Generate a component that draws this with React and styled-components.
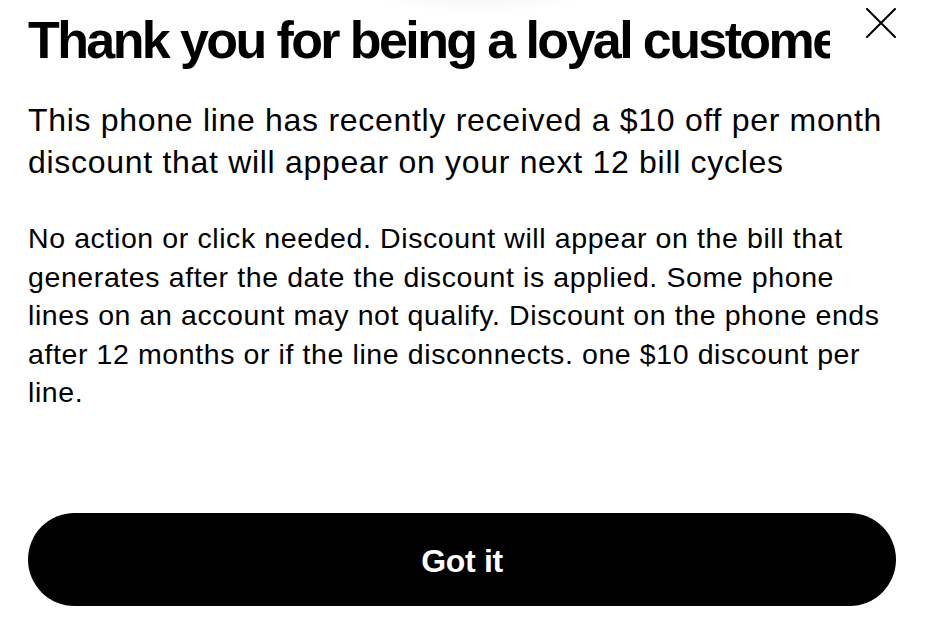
import React from "react";
import styled, { createGlobalStyle } from "styled-components";

const GlobalStyle = createGlobalStyle`
  html, body {
    margin: 0;
    padding: 0;
    background: #ffffff;
  }
  body {
    font-family: "Liberation Sans", Arial, Helvetica, sans-serif;
    color: #000000;
    -webkit-font-smoothing: antialiased;
  }
`;

const Sheet = styled.div`
  width: 927px;
  height: 632px;
  box-sizing: border-box;
  padding: 0 31px 0 28px;
  display: flex;
  flex-direction: column;
  overflow: hidden;
  background:
    radial-gradient(ellipse 100px 12px at 480px 0px, #f7f7f7 0%, rgba(248,248,248,0.5) 60%, rgba(255,255,255,0) 100%),
    #ffffff;
`;

const Header = styled.div`
  display: flex;
  align-items: flex-start;
  gap: 36px;
`;

const Title = styled.h1`
  flex: 1;
  min-width: 0;
  margin: 8px 0 0 0;
  font-family: "Liberation Sans", Arial, Helvetica, sans-serif;
  font-weight: 700;
  font-size: 52px;
  line-height: 64px;
  letter-spacing: -2.6px;
  white-space: nowrap;
  overflow: hidden;
  color: #000;
`;

const CloseButton = styled.button`
  flex: none;
  width: 30px;
  height: 30px;
  margin-top: 8px;
  padding: 0;
  border: none;
  background: transparent;
  cursor: pointer;
  display: flex;
  align-items: center;
  justify-content: center;
`;

const Lead = styled.p`
  margin: 27px 0 0 0;
  font-size: 32px;
  line-height: 42px;
  letter-spacing: 0.7px;
  font-weight: 400;
  color: #000;
`;

const Fine = styled.p`
  margin: 36px 0 0 0;
  font-size: 28.5px;
  line-height: 38.5px;
  letter-spacing: 0.6px;
  font-weight: 400;
  color: #000;
`;

const Spacer = styled.div`
  flex: 1;
`;

const PrimaryButton = styled.button`
  display: flex;
  align-items: center;
  justify-content: center;
  width: 100%;
  height: 93px;
  margin-bottom: 26px;
  padding: 4px 0 0 0;
  box-sizing: border-box;
  border: none;
  border-radius: 47px;
  background: #000;
  color: #fff;
  font-family: "Liberation Sans", Arial, Helvetica, sans-serif;
  font-weight: 700;
  font-size: 32px;
  letter-spacing: -0.3px;
  cursor: pointer;
`;

function CloseIcon() {
  return (
    <svg width="30" height="30" viewBox="0 0 30 30" fill="none">
      <path d="M1 1 L29 29 M29 1 L1 29" stroke="#000" strokeWidth="2" strokeLinecap="round" />
    </svg>
  );
}

export default function App() {
  return (
    <>
      <GlobalStyle />
      <Sheet>
        <Header>
          <Title>Thank you for being a loyal customer</Title>
          <CloseButton aria-label="Close">
            <CloseIcon />
          </CloseButton>
        </Header>
        <Lead>
          This phone line has recently received a $10 off per month discount that will appear on your next 12 bill cycles
        </Lead>
        <Fine>
          No action or click needed. Discount will appear on the bill that generates after the date the discount is applied. Some phone lines on an account may not qualify. Discount on the phone ends after 12 months or if the line disconnects. one $10 discount per line.
        </Fine>
        <Spacer />
        <PrimaryButton>Got it</PrimaryButton>
      </Sheet>
    </>
  );
}
